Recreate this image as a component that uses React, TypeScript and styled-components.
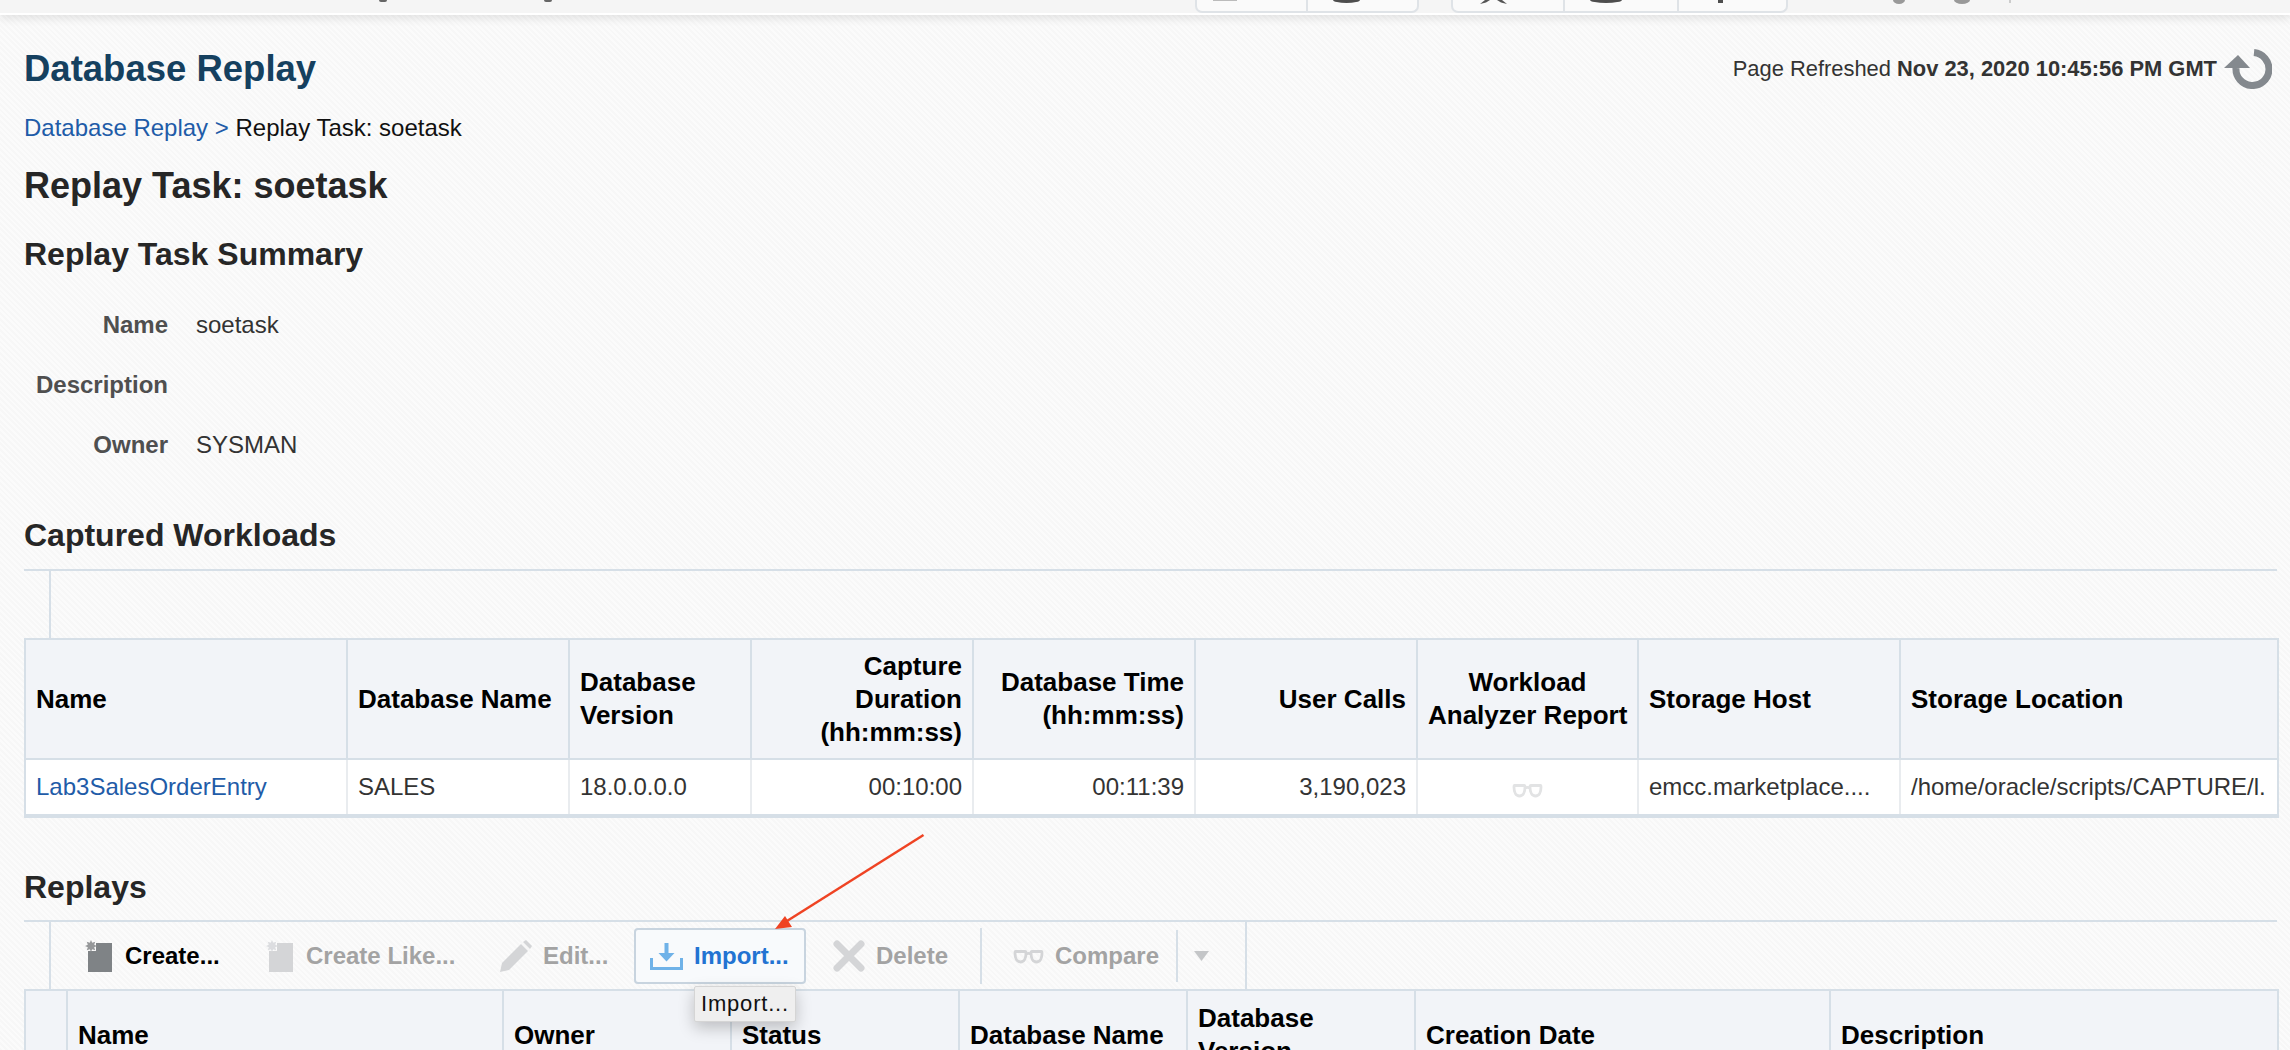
import React from 'react';
import styled, { createGlobalStyle, css } from 'styled-components';

const COLORS = {
  line: '#d6dfe7',
  cellLine: '#e9ecef',
  headBg: '#f2f4f8',
  link: '#1f5ca8',
  title: '#15405f',
  heading: '#262626',
  text: '#333333',
  label: '#4f4f4f',
  disabled: '#a3a3a3',
  disabledIcon: '#d4d5d7',
  activeBlue: '#2273d2',
};

const GlobalStyle = createGlobalStyle`
  html, body {
    margin: 0;
    height: 100%;
    overflow: hidden;
  }
  body {
    font-family: "Liberation Sans", Arial, sans-serif;
    font-size: 24px;
    color: ${COLORS.text};
    background: repeating-linear-gradient(45deg, #f7f7f7 0 2px, #fbfbfb 2px 4px);
  }
`;

const Page = styled.div`
  position: relative;
  width: 2290px;
  height: 1050px;
  overflow: hidden;
`;

/* browser chrome, cut off at the top of the capture */
const TopBar = styled.div`
  height: 13px;
  background: #f5f5f5;
  border-bottom: 2px solid #ffffff;
  box-shadow: 0 4px 8px rgba(0, 0, 0, 0.09);
  display: flex;
  align-items: flex-start;
`;

const TextStub = styled.span<{ $left: number }>`
  margin-left: ${(p) => p.$left}px;
  width: 8px;
  height: 2px;
  background: #666;
  border-radius: 0 0 4px 4px;
`;

const TabGroup = styled.div<{ $left: number }>`
  margin-left: ${(p) => p.$left}px;
  height: 13px;
  box-sizing: border-box;
  display: flex;
  background: #fafafa;
  border: 2px solid #dfe3e7;
  border-top: 0;
  border-radius: 0 0 7px 7px;
`;

const Tab = styled.div<{ $w: number; $pad: number }>`
  width: ${(p) => p.$w}px;
  padding-left: ${(p) => p.$pad}px;
  box-sizing: border-box;
  display: flex;
  align-items: flex-start;
  & + & {
    border-left: 2px solid #dfe3e7;
  }
`;

const Stub = styled.span<{ $w: number; $h: number; $round?: boolean; $color?: string }>`
  display: block;
  width: ${(p) => p.$w}px;
  height: ${(p) => p.$h}px;
  background: ${(p) => p.$color || '#4d4d4d'};
  border-radius: ${(p) => (p.$round ? '0 0 50% 50% / 0 0 100% 100%' : '0')};
`;

const GrayStub = styled(Stub)<{ $left: number }>`
  margin-left: ${(p) => p.$left}px;
`;

const Content = styled.main`
  padding: 21px 13px 0 24px;
`;

const TitleRow = styled.header`
  height: 66px;
  display: flex;
  align-items: center;
  justify-content: space-between;
`;

const Title = styled.h1`
  margin: 0;
  font-size: 36.5px;
  font-weight: 700;
  color: ${COLORS.title};
`;

const Refreshed = styled.div`
  display: flex;
  align-items: center;
  gap: 7px;
  padding-right: 5px;
  font-size: 21.9px;
  color: ${COLORS.text};
  b {
    font-weight: 700;
  }
`;

const Breadcrumb = styled.nav`
  margin-top: 10px;
  height: 32px;
  line-height: 32px;
  color: #111;
`;

const Link = styled.a`
  color: ${COLORS.link};
  text-decoration: none;
`;

const PageHeading = styled.h2`
  margin: 26px 0 0;
  height: 32px;
  line-height: 32px;
  font-size: 36px;
  font-weight: 700;
  color: ${COLORS.heading};
`;

const SubHeading = styled.h3<{ $top: number }>`
  margin: ${(p) => p.$top}px 0 0;
  height: 32px;
  line-height: 32px;
  font-size: 32px;
  font-weight: 700;
  color: ${COLORS.heading};
`;

const SummaryForm = styled.dl`
  margin: 25px 0 0;
  display: grid;
  grid-template-columns: 144px 1fr;
  grid-auto-rows: 60px;
  column-gap: 28px;
  align-items: center;
`;

const FieldLabel = styled.dt`
  text-align: right;
  font-weight: 700;
  color: ${COLORS.label};
`;

const FieldValue = styled.dd`
  margin: 0;
  color: ${COLORS.text};
`;

const ToolbarArea = styled.div<{ $top: number }>`
  margin-top: ${(p) => p.$top}px;
  height: 69px;
  box-sizing: border-box;
  border-top: 2px solid ${COLORS.line};
  display: flex;
`;

const Toolbar = styled.div`
  margin-left: 25px;
  padding-left: 18px;
  border-left: 2px solid ${COLORS.line};
  display: flex;
  align-items: flex-start;
`;

const ToolbarEnd = styled(Toolbar)`
  width: 1198px;
  box-sizing: border-box;
  border-right: 2px solid ${COLORS.line};
`;

const ToolButton = styled.div<{
  $w: number;
  $disabled?: boolean;
  $active?: boolean;
  $gap?: number;
  $pad?: number;
  $left?: number;
}>`
  position: relative;
  width: ${(p) => p.$w}px;
  height: 56px;
  margin-top: 6px;
  margin-left: ${(p) => p.$left ?? 0}px;
  box-sizing: border-box;
  display: flex;
  align-items: center;
  gap: ${(p) => p.$gap ?? 11}px;
  padding-left: ${(p) => p.$pad ?? 16}px;
  font-weight: 700;
  white-space: nowrap;
  color: ${(p) => (p.$disabled ? COLORS.disabled : '#000')};
  ${(p) =>
    p.$active &&
    css`
      color: ${COLORS.activeBlue};
      background: #f8fafc;
      border: 2px solid #c8d4df;
      border-radius: 4px;
    `}
`;

const ToolDivider = styled.span`
  width: 2px;
  height: 56px;
  margin-top: 6px;
  background: ${COLORS.line};
`;

const ShortDivider = styled(ToolDivider)`
  height: 52px;
  margin-top: 8px;
`;

const Tooltip = styled.div`
  position: absolute;
  left: 58px;
  top: 56px;
  width: 102px;
  height: 36px;
  box-sizing: border-box;
  display: flex;
  align-items: center;
  justify-content: center;
  font-size: 22px;
  font-weight: 400;
  letter-spacing: 0.8px;
  color: #111;
  background: #efefef;
  border: 1px solid #d5d5d5;
  border-radius: 2px;
  box-shadow: 0 6px 16px rgba(0, 0, 0, 0.22);
  z-index: 3;
`;

const Annotation = styled.svg`
  position: absolute;
  left: 760px;
  top: 825px;
  z-index: 4;
`;

const Table = styled.table<{ $clip?: boolean }>`
  width: 2253px;
  table-layout: fixed;
  border-collapse: separate;
  border-spacing: 0;
  border: 2px solid ${COLORS.line};
  box-sizing: border-box;
  ${(p) => !p.$clip && 'border-bottom-width: 4px;'}
`;

const Col = styled.col<{ $w: number }>`
  width: ${(p) => p.$w}px;
`;

const HeadCell = styled.th<{ $align?: string; $h: number }>`
  height: ${(p) => p.$h}px;
  padding: 0 10px;
  box-sizing: border-box;
  background: ${COLORS.headBg};
  border-right: 2px solid ${COLORS.line};
  border-bottom: 2px solid ${COLORS.line};
  text-align: ${(p) => p.$align || 'left'};
  font-size: 26px;
  line-height: 33px;
  font-weight: 700;
  white-space: nowrap;
  color: #000;
  &:last-child {
    border-right: 0;
  }
`;

const BodyCell = styled.td<{ $align?: string }>`
  height: 54px;
  padding: 0 10px;
  box-sizing: border-box;
  background: #fff;
  border-right: 2px solid ${COLORS.cellLine};
  text-align: ${(p) => p.$align || 'left'};
  white-space: nowrap;
  overflow: hidden;
  color: ${COLORS.text};
  &:last-child {
    border-right: 0;
  }
  svg {
    vertical-align: -3px;
  }
`;

const NewDocIcon = ({ color, star }: { color: string; star: string }) => (
  <svg width="28" height="32" viewBox="0 0 28 32">
    <path d="M11 3H27V32H3V11H11Z" fill={color} />
    <path d="M6 0l1.200 2.800 3-1-1 3 2.800 1.200-2.800 1.200 1 3-3-1L6 12 4.800 9.200l-3 1 1-3L0 6l2.800-1.200-1-3 3 1Z" fill={star} />
  </svg>
);

const PencilIcon = () => (
  <svg width="32" height="32" viewBox="0 0 32 32">
    <path d="M0 32l2-9L21 4l7 7L9 30Z" fill={COLORS.disabledIcon} />
    <path d="M23 2l3-2 6 6-2 3Z" fill={COLORS.disabledIcon} />
  </svg>
);

const ImportIcon = () => (
  <svg width="33" height="27" viewBox="0 0 33 27">
    <path d="M1.500 15v10.500h30V15" fill="none" stroke="#6fb2e8" strokeWidth="3" />
    <path d="M14.500 0h4v10h6l-8 8.500-8-8.500h6Z" fill="#6fb2e8" />
  </svg>
);

const CrossIcon = () => (
  <svg width="32" height="32" viewBox="0 0 32 32">
    <path d="M4 4L28 28M28 4L4 28" stroke={COLORS.disabledIcon} strokeWidth="7" strokeLinecap="round" />
  </svg>
);

const GlassesIcon = ({ tone = COLORS.disabledIcon }: { tone?: string }) => (
  <svg width="31" height="15" viewBox="0 0 30 15">
    <path
      d="M2 2.500h9.500c.8 0 1 .8 1 1.800 0 5-2 8.700-5.500 8.700S1.500 9.300 1.500 4.300c0-1 0-1.800.5-1.800ZM28 2.500h-9.500c-.8 0-1 .8-1 1.800 0 5 2 8.700 5.500 8.700s5.500-3.700 5.500-8.700c0-1 0-1.800-.5-1.800ZM12.500 5c1.600-.7 3.400-.7 5 0"
      fill="none"
      stroke={tone}
      strokeWidth="2.800"
    />
  </svg>
);

const CaretIcon = () => (
  <svg width="15" height="10" viewBox="0 0 15 10">
    <path d="M0 0H15L7.500 10Z" fill="#c4c6c8" />
  </svg>
);

const RefreshIcon = () => (
  <svg width="48" height="40" viewBox="0 0 48 40">
    <path d="M30 3.600A16.500 16.500 0 1 1 12 19" fill="none" stroke="#84898e" strokeWidth="7" />
    <path d="M0 19L14 6l12 13Z" fill="#84898e" />
  </svg>
);

const StarStub = () => (
  <svg width="33" height="4" viewBox="0 0 33 4">
    <path d="M3 4L8 0h5L9 2.500ZM30 4L25 0h-5L24 2.500Z" fill="#555" />
  </svg>
);

const ArrowMark = () => (
  <Annotation width="180" height="120" viewBox="0 0 180 120">
    <path d="M163.500 10L27 96" fill="none" stroke="#ef4323" strokeWidth="2.500" />
    <path d="M15 104L25 91 32 102Z" fill="#ef4323" />
  </Annotation>
);

interface Column {
  label: React.ReactNode;
  width: number;
  align?: string;
}

const capturedColumns: Column[] = [
  { label: 'Name', width: 322 },
  { label: 'Database Name', width: 222 },
  { label: <>Database<br />Version</>, width: 182 },
  { label: <>Capture<br />Duration<br />(hh:mm:ss)</>, width: 222, align: 'right' },
  { label: <>Database Time<br />(hh:mm:ss)</>, width: 222, align: 'right' },
  { label: 'User Calls', width: 222, align: 'right' },
  { label: <>Workload<br />Analyzer Report</>, width: 221, align: 'center' },
  { label: 'Storage Host', width: 262 },
  { label: 'Storage Location', width: 376 },
];

const replayColumns: Column[] = [
  { label: '', width: 42 },
  { label: 'Name', width: 436 },
  { label: 'Owner', width: 228 },
  { label: 'Status', width: 228 },
  { label: 'Database Name', width: 228 },
  { label: <>Database<br />Version</>, width: 228 },
  { label: 'Creation Date', width: 415 },
  { label: 'Description', width: 446 },
];

const TableHead = ({ columns, height }: { columns: Column[]; height: number }) => (
  <>
    <colgroup>
      {columns.map((c, i) => (
        <Col key={i} $w={c.width} />
      ))}
    </colgroup>
    <thead>
      <tr>
        {columns.map((c, i) => (
          <HeadCell key={i} $align={c.align} $h={height}>
            {c.label}
          </HeadCell>
        ))}
      </tr>
    </thead>
  </>
);

export default function App() {
  return (
    <Page>
      <GlobalStyle />
      <TopBar>
        <TextStub $left={379} />
        <TextStub $left={157} />
        <TabGroup $left={643}>
          <Tab $w={109} $pad={16}>
            <Stub $w={24} $h={1} $color="#bbb" />
          </Tab>
          <Tab $w={111} $pad={25}>
            <Stub $w={27} $h={3} $round />
          </Tab>
        </TabGroup>
        <TabGroup $left={32}>
          <Tab $w={110} $pad={24}>
            <StarStub />
          </Tab>
          <Tab $w={114} $pad={25}>
            <Stub $w={32} $h={3} $round />
          </Tab>
          <Tab $w={109} $pad={39}>
            <Stub $w={5} $h={3} />
          </Tab>
        </TabGroup>
        <GrayStub $left={105} $w={12} $h={4} $color="#999" $round />
        <GrayStub $left={49} $w={16} $h={4} $color="#999" $round />
        <GrayStub $left={39} $w={2} $h={3} $color="#ccc" />
      </TopBar>

      <Content>
        <TitleRow>
          <Title>Database Replay</Title>
          <Refreshed>
            <span>
              Page Refreshed <b>Nov 23, 2020 10:45:56 PM GMT</b>
            </span>
            <RefreshIcon />
          </Refreshed>
        </TitleRow>
        <Breadcrumb>
          <Link href="#">Database Replay &gt;</Link> Replay Task: soetask
        </Breadcrumb>
        <PageHeading>Replay Task: soetask</PageHeading>
        <SubHeading $top={36}>Replay Task Summary</SubHeading>

        <SummaryForm>
          <FieldLabel>Name</FieldLabel>
          <FieldValue>soetask</FieldValue>
          <FieldLabel>Description</FieldLabel>
          <FieldValue />
          <FieldLabel>Owner</FieldLabel>
          <FieldValue>SYSMAN</FieldValue>
        </SummaryForm>

        <SubHeading $top={44}>Captured Workloads</SubHeading>
        <ToolbarArea $top={18}>
          <Toolbar />
        </ToolbarArea>
        <Table>
          <TableHead columns={capturedColumns} height={120} />
          <tbody>
            <tr>
              <BodyCell>
                <Link href="#">Lab3SalesOrderEntry</Link>
              </BodyCell>
              <BodyCell>SALES</BodyCell>
              <BodyCell>18.0.0.0.0</BodyCell>
              <BodyCell $align="right">00:10:00</BodyCell>
              <BodyCell $align="right">00:11:39</BodyCell>
              <BodyCell $align="right">3,190,023</BodyCell>
              <BodyCell $align="center">
                <GlassesIcon tone="#e2e3e4" />
              </BodyCell>
              <BodyCell>emcc.marketplace....</BodyCell>
              <BodyCell>/home/oracle/scripts/CAPTURE/l.</BodyCell>
            </tr>
          </tbody>
        </Table>

        <SubHeading $top={53}>Replays</SubHeading>
        <ToolbarArea $top={17}>
          <ToolbarEnd>
            <ToolButton $w={181} $gap={12}>
              <NewDocIcon color="#7f8386" star="#96989a" />
              Create...
            </ToolButton>
            <ToolButton $w={234} $gap={12} $disabled>
              <NewDocIcon color={COLORS.disabledIcon} star="#dcdde0" />
              Create Like...
            </ToolButton>
            <ToolButton $w={150} $disabled>
              <PencilIcon />
              Edit...
            </ToolButton>
            <ToolButton $w={172} $pad={14} $active>
              <ImportIcon />
              Import...
              <Tooltip>Import...</Tooltip>
            </ToolButton>
            <ToolButton $w={163} $left={11} $disabled>
              <CrossIcon />
              Delete
            </ToolButton>
            <ToolDivider />
            <ToolButton $w={194} $pad={31} $disabled>
              <GlassesIcon />
              Compare
            </ToolButton>
            <ShortDivider />
            <ToolButton $w={50} $disabled>
              <CaretIcon />
            </ToolButton>
          </ToolbarEnd>
        </ToolbarArea>
        <Table $clip>
          <TableHead columns={replayColumns} height={90} />
        </Table>
      </Content>
      <ArrowMark />
    </Page>
  );
}
